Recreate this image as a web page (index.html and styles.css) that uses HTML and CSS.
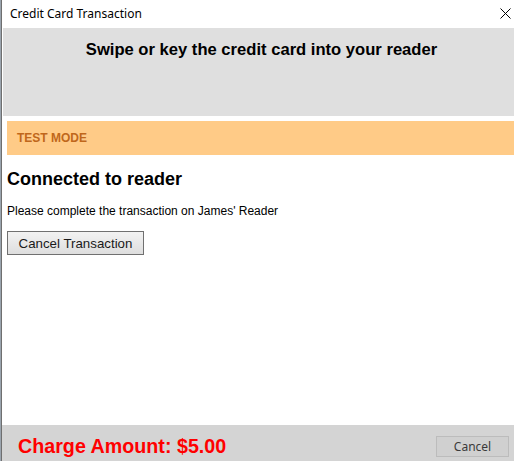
FILE: index.html
```html
<!DOCTYPE html>
<html lang="en">
<head>
    <meta charset="UTF-8">
    <title>Credit Card Transaction</title>
    <link rel="stylesheet" href="styles.css">
</head>
<body>

    <div class="window">
        <div class="titlebar">
            <span class="title">Credit Card Transaction</span>
            <svg class="close-icon" width="11" height="11" viewBox="0 0 11 11">
                <path d="M0.5 0.5 L10.5 10.5 M10.5 0.5 L0.5 10.5" stroke="#000" stroke-width="1" fill="none"/>
            </svg>
        </div>

        <div class="content">
            <div class="prompt">Swipe or key the credit card into your reader</div>

            <div class="test-mode">TEST MODE</div>

            <div class="status">
                <h2>Connected to reader</h2>
                <p>Please complete the transaction on James' Reader</p>
                <button class="cancel-tx-btn">Cancel Transaction</button>
            </div>
        </div>

        <div class="footer">
            <span class="charge">Charge Amount: $5.00</span>
            <button class="cancel-btn">Cancel</button>
        </div>
    </div>

</body>
</html>
```

FILE: styles.css
```css
html, body {
    margin: 0;
    height: 100%;
}
body {
    background-color: #9aa4ae;
    font-family: "Liberation Sans", Arial, sans-serif;
    overflow: hidden;
}
.window {
    margin-left: 1px;
    border-left: 1px solid #6f6f6f;
    height: 461px;
    background-color: white;
    display: flex;
    flex-direction: column;
}
.titlebar {
    height: 28px;
    display: flex;
    align-items: center;
    justify-content: space-between;
    padding: 0 3px 0 8px;
    background-color: white;
}
.title {
    font-family: "Noto Sans", sans-serif;
    font-size: 12px;
    color: #000;
    margin-top: -1px;
}
.close-icon {
    margin-top: -2px;
}
.content {
    flex: 1;
    padding-left: 1px;
}
.prompt {
    height: 88px;
    box-sizing: border-box;
    padding: 12px 0 0 6px;
    background-color: #dfdfdf;
    text-align: center;
    font-size: 16.6px;
    font-weight: bold;
    color: #000;
}
.test-mode {
    margin: 5px 0 0 4px;
    height: 34px;
    display: flex;
    align-items: center;
    padding-left: 10px;
    background-color: #ffcb87;
    color: #c0671b;
    font-size: 12px;
    font-weight: bold;
}
.status {
    padding-left: 4px;
}
.status h2 {
    margin: 14px 0 0 0;
    font-size: 18px;
    line-height: 21px;
    color: #000;
}
.status p {
    margin: 14px 0 0 0;
    font-size: 12px;
    line-height: 14px;
    color: #000;
}
button {
    font-family: "Liberation Sans", Arial, sans-serif;
    cursor: pointer;
}
.cancel-tx-btn {
    margin-top: 13px;
    width: 137px;
    height: 24px;
    padding: 0;
    border: 1px solid #707070;
    border-radius: 0;
    background: linear-gradient(#f2f2f2, #dedede);
    font-size: 13.3px;
    color: #1a1a1a;
}
.footer {
    height: 36px;
    display: flex;
    align-items: flex-start;
    justify-content: space-between;
    padding: 0 5px 0 16px;
    background-color: #d4d4d4;
}
.charge {
    margin-top: 10px;
    font-size: 19.7px;
    line-height: 22px;
    font-weight: bold;
    color: #ff0000;
}
.cancel-btn {
    margin-top: 11px;
    width: 73px;
    height: 21px;
    padding: 0;
    border: 1px solid #bcbcbc;
    border-radius: 0;
    background-color: #d0d0d0;
    font-family: "Noto Sans", sans-serif;
    font-size: 12px;
    color: #3a3a3a;
}
```
